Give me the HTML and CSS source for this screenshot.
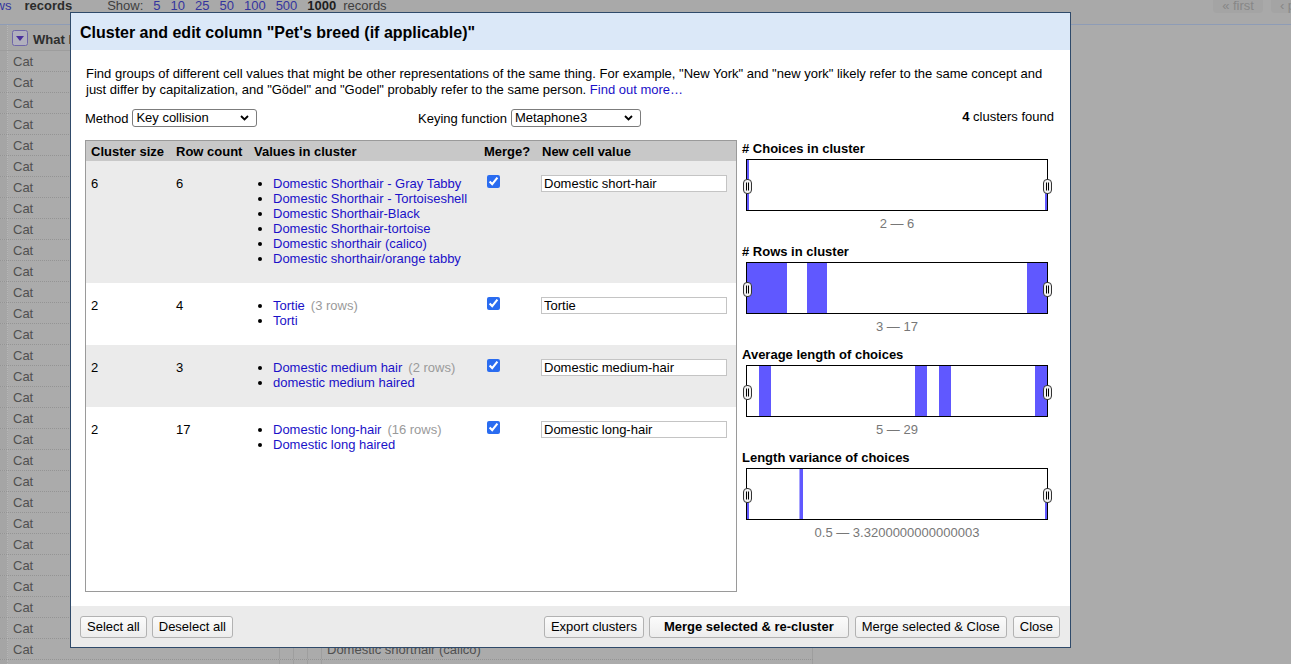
FILE: index.html
```html
<!DOCTYPE html>
<html>
<head>
<meta charset="utf-8">
<title>Cluster and edit</title>
<link rel="stylesheet" href="styles.css">
</head>
<body>
<div class="page">
  <div class="viewbar">
    <div class="mode"><a class="mode-link">rows</a><b class="mode-on">records</b></div>
    <div class="show">
      <span>Show:</span><a>5</a><a>10</a><a>25</a><a>50</a><a>100</a><a>500</a><b>1000</b><span class="show-tail">records</span>
    </div>
    <div class="pager"><span class="pbtn">« first</span><span class="pbtn">‹ previous</span></div>
  </div>
  <div class="grid">
    <div class="ghead">
      <div class="c0"></div>
      <div class="c1 hcell"><span class="dd"><svg width="16" height="16" viewBox="0 0 16 16"><rect x="0.5" y="0.5" width="15" height="15" rx="2" fill="#b1b0bd" stroke="#6f66a8"/><path d="M4 6h8l-4 5z" fill="#4a2f9c"/></svg></span><b class="htext">What kind of pet do you have?</b></div>
      <div class="c2"></div><div class="c3"></div><div class="c4"></div>
      <div class="c5"></div>
    </div>
    <div class="grow"><div class="c0"></div><div class="c1">Cat</div><div class="c2"></div><div class="c3"></div><div class="c4"></div><div class="c5"></div></div>
    <div class="grow"><div class="c0"></div><div class="c1">Cat</div><div class="c2"></div><div class="c3"></div><div class="c4"></div><div class="c5"></div></div>
    <div class="grow"><div class="c0"></div><div class="c1">Cat</div><div class="c2"></div><div class="c3"></div><div class="c4"></div><div class="c5"></div></div>
    <div class="grow"><div class="c0"></div><div class="c1">Cat</div><div class="c2"></div><div class="c3"></div><div class="c4"></div><div class="c5"></div></div>
    <div class="grow"><div class="c0"></div><div class="c1">Cat</div><div class="c2"></div><div class="c3"></div><div class="c4"></div><div class="c5"></div></div>
    <div class="grow"><div class="c0"></div><div class="c1">Cat</div><div class="c2"></div><div class="c3"></div><div class="c4"></div><div class="c5"></div></div>
    <div class="grow"><div class="c0"></div><div class="c1">Cat</div><div class="c2"></div><div class="c3"></div><div class="c4"></div><div class="c5"></div></div>
    <div class="grow"><div class="c0"></div><div class="c1">Cat</div><div class="c2"></div><div class="c3"></div><div class="c4"></div><div class="c5"></div></div>
    <div class="grow"><div class="c0"></div><div class="c1">Cat</div><div class="c2"></div><div class="c3"></div><div class="c4"></div><div class="c5"></div></div>
    <div class="grow"><div class="c0"></div><div class="c1">Cat</div><div class="c2"></div><div class="c3"></div><div class="c4"></div><div class="c5"></div></div>
    <div class="grow"><div class="c0"></div><div class="c1">Cat</div><div class="c2"></div><div class="c3"></div><div class="c4"></div><div class="c5"></div></div>
    <div class="grow"><div class="c0"></div><div class="c1">Cat</div><div class="c2"></div><div class="c3"></div><div class="c4"></div><div class="c5"></div></div>
    <div class="grow"><div class="c0"></div><div class="c1">Cat</div><div class="c2"></div><div class="c3"></div><div class="c4"></div><div class="c5"></div></div>
    <div class="grow"><div class="c0"></div><div class="c1">Cat</div><div class="c2"></div><div class="c3"></div><div class="c4"></div><div class="c5"></div></div>
    <div class="grow"><div class="c0"></div><div class="c1">Cat</div><div class="c2"></div><div class="c3"></div><div class="c4"></div><div class="c5"></div></div>
    <div class="grow"><div class="c0"></div><div class="c1">Cat</div><div class="c2"></div><div class="c3"></div><div class="c4"></div><div class="c5"></div></div>
    <div class="grow"><div class="c0"></div><div class="c1">Cat</div><div class="c2"></div><div class="c3"></div><div class="c4"></div><div class="c5"></div></div>
    <div class="grow"><div class="c0"></div><div class="c1">Cat</div><div class="c2"></div><div class="c3"></div><div class="c4"></div><div class="c5"></div></div>
    <div class="grow"><div class="c0"></div><div class="c1">Cat</div><div class="c2"></div><div class="c3"></div><div class="c4"></div><div class="c5"></div></div>
    <div class="grow"><div class="c0"></div><div class="c1">Cat</div><div class="c2"></div><div class="c3"></div><div class="c4"></div><div class="c5"></div></div>
    <div class="grow"><div class="c0"></div><div class="c1">Cat</div><div class="c2"></div><div class="c3"></div><div class="c4"></div><div class="c5"></div></div>
    <div class="grow"><div class="c0"></div><div class="c1">Cat</div><div class="c2"></div><div class="c3"></div><div class="c4"></div><div class="c5"></div></div>
    <div class="grow"><div class="c0"></div><div class="c1">Cat</div><div class="c2"></div><div class="c3"></div><div class="c4"></div><div class="c5"></div></div>
    <div class="grow"><div class="c0"></div><div class="c1">Cat</div><div class="c2"></div><div class="c3"></div><div class="c4"></div><div class="c5"></div></div>
    <div class="grow"><div class="c0"></div><div class="c1">Cat</div><div class="c2"></div><div class="c3"></div><div class="c4"></div><div class="c5"></div></div>
    <div class="grow"><div class="c0"></div><div class="c1">Cat</div><div class="c2"></div><div class="c3"></div><div class="c4"></div><div class="c5"></div></div>
    <div class="grow"><div class="c0"></div><div class="c1">Cat</div><div class="c2"></div><div class="c3"></div><div class="c4"></div><div class="c5"></div></div>
    <div class="grow"><div class="c0"></div><div class="c1">Cat</div><div class="c2"></div><div class="c3"></div><div class="c4"></div><div class="c5"></div></div>
    <div class="grow"><div class="c0"></div><div class="c1">Cat</div><div class="c2"></div><div class="c3"></div><div class="c4"></div><div class="c5">Domestic shorthair (calico)</div></div>
    <div class="grow"><div class="c0"></div><div class="c1">Cat</div><div class="c2"></div><div class="c3"></div><div class="c4"></div><div class="c5"></div></div>
  </div>
</div>

<div class="dialog">
  <div class="dlg-head">Cluster and edit column "Pet's breed (if applicable)"</div>
  <div class="dlg-body">
    <p class="desc">Find groups of different cell values that might be other representations of the same thing. For example, "New York" and "new york" likely refer to the same concept and just differ by capitalization, and "Gödel" and "Godel" probably refer to the same person. <a class="lnk">Find out more…</a></p>
    <div class="method-row">
      <div class="opt opt-method">
        <span>Method</span>
        <span class="sel sel-method"><select><option>Key collision</option></select><svg class="chev" width="9" height="6" viewBox="0 0 9 6"><path d="M1 1l3.5 3.5L8 1" fill="none" stroke="#000" stroke-width="1.8"/></svg></span>
      </div>
      <div class="opt">
        <span>Keying function</span>
        <span class="sel sel-key"><select><option>Metaphone3</option></select><svg class="chev" width="9" height="6" viewBox="0 0 9 6"><path d="M1 1l3.5 3.5L8 1" fill="none" stroke="#000" stroke-width="1.8"/></svg></span>
      </div>
      <div class="found"><b>4</b> clusters found</div>
    </div>
    <div class="main">
      <div class="table-box">
        <table class="ctable">
          <colgroup><col class="w1"><col class="w2"><col class="w3"><col class="w4"><col class="w5"></colgroup>
          <thead>
            <tr><th>Cluster size</th><th>Row count</th><th>Values in cluster</th><th>Merge?</th><th>New cell value</th></tr>
          </thead>
          <tbody>
            <tr class="odd">
              <td>6</td><td>6</td>
              <td><ul>
                <li><a class="lnk">Domestic Shorthair - Gray Tabby</a></li>
                <li><a class="lnk">Domestic Shorthair - Tortoiseshell</a></li>
                <li><a class="lnk">Domestic Shorthair-Black</a></li>
                <li><a class="lnk">Domestic Shorthair-tortoise</a></li>
                <li><a class="lnk">Domestic shorthair (calico)</a></li>
                <li><a class="lnk">Domestic shorthair/orange tabby</a></li>
              </ul></td>
              <td><input type="checkbox" checked></td>
              <td><input class="newval" type="text" value="Domestic short-hair"></td>
            </tr>
            <tr>
              <td>2</td><td>4</td>
              <td><ul>
                <li><a class="lnk">Tortie</a><span class="cnt">(3 rows)</span></li>
                <li><a class="lnk">Torti</a></li>
              </ul></td>
              <td><input type="checkbox" checked></td>
              <td><input class="newval" type="text" value="Tortie"></td>
            </tr>
            <tr class="odd">
              <td>2</td><td>3</td>
              <td><ul>
                <li><a class="lnk">Domestic medium hair</a><span class="cnt">(2 rows)</span></li>
                <li><a class="lnk">domestic medium haired</a></li>
              </ul></td>
              <td><input type="checkbox" checked></td>
              <td><input class="newval" type="text" value="Domestic medium-hair"></td>
            </tr>
            <tr>
              <td>2</td><td>17</td>
              <td><ul>
                <li><a class="lnk">Domestic long-hair</a><span class="cnt">(16 rows)</span></li>
                <li><a class="lnk">Domestic long haired</a></li>
              </ul></td>
              <td><input type="checkbox" checked></td>
              <td><input class="newval" type="text" value="Domestic long-hair"></td>
            </tr>
          </tbody>
        </table>
      </div>
      <div class="facets">
        <div class="facet">
          <div class="facet-title"># Choices in cluster</div>
          <div class="hist">
            <span class="bar" style="left:0;width:2px;height:50px"></span>
            <span class="bar" style="left:298px;width:2px;height:17px"></span>
            <span class="handle hl"><svg width="9" height="15" viewBox="0 0 9 15"><rect x="0.5" y="0.5" width="8" height="14" rx="3.5" fill="#f2f2f2" stroke="#333"/><path d="M3.5 3.5v8M5.5 3.5v8" stroke="#000" stroke-width="1"/></svg></span>
            <span class="handle hr"><svg width="9" height="15" viewBox="0 0 9 15"><rect x="0.5" y="0.5" width="8" height="14" rx="3.5" fill="#f2f2f2" stroke="#333"/><path d="M3.5 3.5v8M5.5 3.5v8" stroke="#000" stroke-width="1"/></svg></span>
          </div>
          <div class="facet-range">2 — 6</div>
        </div>
        <div class="facet">
          <div class="facet-title"># Rows in cluster</div>
          <div class="hist">
            <span class="bar" style="left:0;width:40px;height:50px"></span>
            <span class="bar" style="left:60px;width:20px;height:50px"></span>
            <span class="bar" style="left:280px;width:20px;height:50px"></span>
            <span class="handle hl"><svg width="9" height="15" viewBox="0 0 9 15"><rect x="0.5" y="0.5" width="8" height="14" rx="3.5" fill="#f2f2f2" stroke="#333"/><path d="M3.5 3.5v8M5.5 3.5v8" stroke="#000" stroke-width="1"/></svg></span>
            <span class="handle hr"><svg width="9" height="15" viewBox="0 0 9 15"><rect x="0.5" y="0.5" width="8" height="14" rx="3.5" fill="#f2f2f2" stroke="#333"/><path d="M3.5 3.5v8M5.5 3.5v8" stroke="#000" stroke-width="1"/></svg></span>
          </div>
          <div class="facet-range">3 — 17</div>
        </div>
        <div class="facet">
          <div class="facet-title">Average length of choices</div>
          <div class="hist">
            <span class="bar" style="left:12px;width:12px;height:50px"></span>
            <span class="bar" style="left:168px;width:12px;height:50px"></span>
            <span class="bar" style="left:192px;width:12px;height:50px"></span>
            <span class="bar" style="left:288px;width:12px;height:50px"></span>
            <span class="handle hl"><svg width="9" height="15" viewBox="0 0 9 15"><rect x="0.5" y="0.5" width="8" height="14" rx="3.5" fill="#f2f2f2" stroke="#333"/><path d="M3.5 3.5v8M5.5 3.5v8" stroke="#000" stroke-width="1"/></svg></span>
            <span class="handle hr"><svg width="9" height="15" viewBox="0 0 9 15"><rect x="0.5" y="0.5" width="8" height="14" rx="3.5" fill="#f2f2f2" stroke="#333"/><path d="M3.5 3.5v8M5.5 3.5v8" stroke="#000" stroke-width="1"/></svg></span>
          </div>
          <div class="facet-range">5 — 29</div>
        </div>
        <div class="facet">
          <div class="facet-title">Length variance of choices</div>
          <div class="hist">
            <span class="bar" style="left:0;width:2px;height:17px"></span>
            <span class="bar bar-soft" style="left:52px;width:1px;height:50px"></span>
            <span class="bar" style="left:53px;width:3px;height:50px"></span>
            <span class="bar" style="left:298px;width:2px;height:17px"></span>
            <span class="handle hl"><svg width="9" height="15" viewBox="0 0 9 15"><rect x="0.5" y="0.5" width="8" height="14" rx="3.5" fill="#f2f2f2" stroke="#333"/><path d="M3.5 3.5v8M5.5 3.5v8" stroke="#000" stroke-width="1"/></svg></span>
            <span class="handle hr"><svg width="9" height="15" viewBox="0 0 9 15"><rect x="0.5" y="0.5" width="8" height="14" rx="3.5" fill="#f2f2f2" stroke="#333"/><path d="M3.5 3.5v8M5.5 3.5v8" stroke="#000" stroke-width="1"/></svg></span>
          </div>
          <div class="facet-range">0.5 — 3.3200000000000003</div>
        </div>
      </div>
    </div>
  </div>
  <div class="dlg-foot">
    <div class="btns">
      <button>Select all</button>
      <button>Deselect all</button>
    </div>
    <div class="btns btns-right">
      <button>Export clusters</button>
      <button class="primary">Merge selected &amp; re-cluster</button>
      <button>Merge selected &amp; Close</button>
      <button>Close</button>
    </div>
  </div>
</div>
</body>
</html>
```

FILE: styles.css
```css
* { box-sizing: border-box; }
html, body { margin: 0; padding: 0; }
body {
  width: 1291px;
  height: 664px;
  overflow: hidden;
  position: relative;
  background: #ababab;
  font-family: "Liberation Sans", Arial, Helvetica, sans-serif;
  font-size: 13px;
  color: #000;
}

/* ---------- background page (dimmed) ---------- */
.page { width: 1291px; }
.viewbar {
  height: 25px;
  border-bottom: 1px solid #8e9cb6;
  background: #a9a9a9;
  display: flex;
  align-items: flex-start;
  white-space: nowrap;
  overflow: hidden;
  line-height: 15px;
}
.mode { margin-left: -16px; margin-top: -2px; display: flex; }
.mode-link { color: #34349e; }
.mode-on { color: #2c2c2c; margin-left: 13px; }
.show { display: flex; gap: 10px; margin-left: 35px; margin-top: -2px; color: #3e3e3e; }
.show a { color: #34349e; }
.show b { color: #1e1e1e; }
.show-tail { margin-left: -3px; }
.pager { margin-left: auto; margin-right: -55px; display: flex; gap: 8px; margin-top: -2px; }
.pbtn {
  height: 17px;
  margin-top: -2px;
  padding: 2px 9px 0;
  background: #a4a4a4;
  border-radius: 0 0 4px 4px;
  color: #878787;
}

.grid { width: 813px; }
.ghead { display: flex; height: 26px; border-bottom: 1px solid #9d9d9d; background: #a8a8a8; }
.grow { display: flex; height: 21px; border-bottom: 1px dotted #949494; line-height: 20px; color: #505050; }
.grow .c1, .grow .c5 { padding-top: 1px; }
.c0 { width: 8px; border-right: 1px dotted #b6b6b6; background: #a5a5a5; flex: none; }
.c1 { width: 272px; border-right: 1px solid #9e9e9e; padding-left: 5px; flex: none; }
.c2, .c3, .c4 { width: 14px; border-right: 1px solid #9e9e9e; flex: none; }
.c5 { width: 491px; border-right: 1px solid #9e9e9e; padding-left: 5px; flex: none; white-space: nowrap; }
.hcell { display: flex; align-items: center; padding-left: 4px; gap: 5px; color: #2e2e2e; white-space: nowrap; overflow: hidden; }
.htext { padding-top: 3px; }
.dd { display: flex; margin-top: 1px; }

/* ---------- dialog ---------- */
.dialog {
  position: absolute;
  left: 70px;
  top: 12px;
  width: 1001px;
  height: 636px;
  border: 1px solid #2f4a6a;
  background: #fff;
  display: flex;
  flex-direction: column;
}
.dlg-head {
  height: 37px;
  flex: none;
  background: #dbe8f8;
  padding-left: 9px;
  font-size: 16px;
  font-weight: bold;
  line-height: 39px;
}
.dlg-body { flex: 1; padding: 16px 15px 0 14px; }
.desc { margin: 0; padding-left: 1px; line-height: 16px; }
.lnk { color: #1a11c8; }

.method-row { display: flex; align-items: center; height: 18px; margin-top: 11px; }
.opt { display: flex; align-items: center; gap: 4px; }
.opt > span:first-child { padding-top: 1px; }
.opt-method { width: 333px; }
.sel { position: relative; display: inline-flex; }
.sel select {
  appearance: none;
  -webkit-appearance: none;
  height: 18px;
  margin: 0;
  padding: 0 20px 0 3px;
  border: 1px solid #7c7c7c;
  border-radius: 3px;
  background: #fff;
  font-family: "Liberation Sans", Arial, Helvetica, sans-serif;
  font-size: 13px;
  color: #000;
  line-height: 16px;
}
.sel-method select { width: 125px; }
.sel-key select { width: 130px; }
.chev { position: absolute; right: 8px; top: 6px; pointer-events: none; }
.found { margin-left: auto; margin-right: 1px; align-self: flex-start; line-height: 15px; }

.main { display: flex; margin-top: 13px; height: 452px; }
.table-box { width: 652px; height: 452px; border: 1px solid #9a9a9a; overflow: hidden; background: #fff; flex: none; }
.ctable { width: 650px; border-collapse: collapse; table-layout: fixed; }
.w1 { width: 85px; }
.w2 { width: 78px; }
.w3 { width: 230px; }
.w4 { width: 58px; }
.w5 { width: 199px; }
.ctable th {
  background: #c8c8c8;
  text-align: left;
  font-weight: bold;
  padding: 3px 5px 1px;
  line-height: 16px;
  white-space: nowrap;
}
.ctable td { vertical-align: top; padding: 15px 5px 17px; line-height: 15px; }
.ctable tr.odd td { background: #ebebeb; }
.ctable ul { margin: 0; padding-left: 19px; }
.ctable li { line-height: 15px; white-space: nowrap; }
.cnt { color: #9a9a9a; margin-left: 6px; }
.ctable input[type="checkbox"] {
  display: block;
  margin: -1px 0 0 3px;
  width: 13px;
  height: 13px;
  accent-color: #2a6cf0;
}
.newval {
  display: block;
  width: 186px;
  height: 17px;
  margin: -1px 0 0 -1px;
  padding: 0 2px;
  border: 1px solid #c4c4c4;
  font-family: "Liberation Sans", Arial, Helvetica, sans-serif;
  font-size: 13px;
  color: #000;
}

.facets { margin-left: 5px; width: 313px; flex: none; }
.facet { margin-bottom: 12px; }
.facet-title { font-weight: bold; line-height: 16px; padding-top: 1px; height: 16px; white-space: nowrap; }
.hist {
  position: relative;
  margin: 3px 0 0 4px;
  width: 302px;
  height: 52px;
  border: 1px solid #000;
  background: #fff;
}
.bar { position: absolute; bottom: 0; background: #6058ff; }
.bar-soft { background: #aaa6ff; }
.handle { position: absolute; top: 19px; width: 9px; height: 15px; display: flex; }
.hl { left: -4px; }
.hr { left: 296px; }
.facet-range { margin: 4px 0 0 4px; width: 302px; height: 16px; padding-top: 1px; text-align: center; color: #777; line-height: 16px; }

.dlg-foot {
  height: 41px;
  flex: none;
  background: #ebebeb;
  display: flex;
  padding: 10px 10px 0 9px;
}
.btns { display: flex; gap: 5px; align-items: flex-start; }
.btns-right { margin-left: auto; gap: 6px; }
.btns-right button:first-child { margin-right: -1px; }
button {
  height: 22px;
  margin: 0;
  padding: 0 6px;
  border: 1px solid #b2b2b2;
  border-radius: 3px;
  background: linear-gradient(#fbfbfb, #ededed);
  font-family: "Liberation Sans", Arial, Helvetica, sans-serif;
  font-size: 13px;
  color: #000;
  line-height: 20px;
  white-space: nowrap;
}
button.primary { font-weight: bold; padding: 0 14px; }
```
